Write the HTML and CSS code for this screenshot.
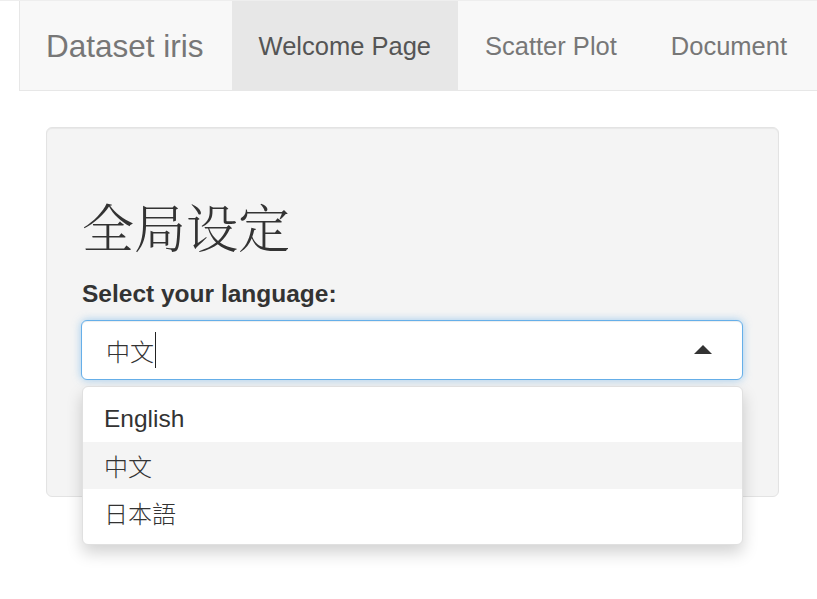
FILE: index.html
```html
<!DOCTYPE html>
<html lang="zh">
<head>
<meta charset="utf-8">
<title>Dataset iris</title>
<link rel="stylesheet" href="styles.css">
</head>
<body>
<nav class="navbar">
  <span class="brand">Dataset iris</span>
  <ul class="nav">
    <li class="tab active">Welcome Page</li>
    <li class="tab">Scatter Plot</li>
    <li class="tab">Document</li>
  </ul>
</nav>
<main class="container">
  <section class="well">
    <h2 class="title">全局设定</h2>
    <label class="label">Select your language:</label>
    <div class="select-wrap">
      <div class="select">
        <span class="value">中文</span><span class="caret-line"></span>
        <span class="arrow"></span>
      </div>
      <div class="dropdown">
        <div class="option">English</div>
        <div class="option hl">中文</div>
        <div class="option">日本語</div>
      </div>
    </div>
  </section>
</main>
</body>
</html>
```

FILE: styles.css
```css
html, body {
  margin: 0;
  padding: 0;
  background: #fff;
}
body {
  min-height: 598px;
  font-family: "Liberation Sans", Arial, "Noto Sans CJK SC", sans-serif;
  color: #333;
  border-top: 1px solid #eeeeee;
}
.navbar {
  margin-left: 19px;
  margin-top: -1px;
  display: flex;
  align-items: stretch;
  background: #f8f8f8;
  border: 1px solid #e7e7e7;
  border-right: none;
  height: 89px;
}
.brand {
  padding: 2px 26px 0 26px;
  line-height: 87px;
  font-size: 31.5px;
  color: #777;
}
.nav {
  list-style: none;
  margin: 0 0 0 2px;
  padding: 0;
  display: flex;
}
.tab {
  padding: 2px 27px 0;
  line-height: 87px;
  font-size: 25.5px;
  color: #777;
}
.tab.active {
  background: #e7e7e7;
  color: #555;
}
.container {
  padding: 36px 38px 0 46px;
}
.well {
  background: #f4f4f4;
  border: 1px solid #e3e3e3;
  border-radius: 6px;
  padding: 34px 35px 116px 35px;
  box-shadow: inset 0 1px 1px rgba(0,0,0,.05);
}
.title {
  margin: 35px 0 24px;
  font-family: "Noto Serif CJK SC", "Noto Sans CJK SC", serif;
  font-weight: 300;
  font-size: 52px;
  line-height: 58px;
  color: #333;
}
.label {
  display: block;
  font-weight: bold;
  font-size: 24.5px;
  line-height: 30px;
  margin-bottom: 11px;
}
.select-wrap {
  position: relative;
  margin-left: -1px;
}
.select {
  position: relative;
  display: flex;
  align-items: center;
  height: 58px;
  padding: 0 24px;
  background: #fff;
  border: 1px solid #66afe9;
  border-radius: 6px;
  box-shadow: inset 0 1px 1px rgba(0,0,0,.075), 0 0 8px rgba(102,175,233,.6);
}
.value {
  font-family: "Noto Sans CJK SC", sans-serif;
  font-size: 24px;
  color: #333;
  font-weight: 300;
}
.caret-line {
  display: inline-block;
  width: 1px;
  height: 36px;
  background: #222;
  margin-left: 1px;
}
.arrow {
  position: absolute;
  right: 30px;
  top: 24px;
  width: 0;
  height: 0;
  border-left: 9px solid transparent;
  border-right: 9px solid transparent;
  border-bottom: 9px solid #333;
}
.dropdown {
  position: absolute;
  left: 1px;
  right: 0;
  top: 66px;
  background: #fff;
  border: 1px solid #e0e0e0;
  border-radius: 6px;
  padding: 8px 0;
  box-shadow: 0 8px 16px rgba(0,0,0,.175);
}
.option {
  padding: 6px 21px;
  line-height: 35px;
  font-size: 24.5px;
  color: #333;
}
.option.hl {
  background: #f4f4f4;
}
.option:nth-child(n+2) {
  font-family: "Noto Sans CJK SC", sans-serif;
  font-weight: 300;
  font-size: 24px;
}
```
